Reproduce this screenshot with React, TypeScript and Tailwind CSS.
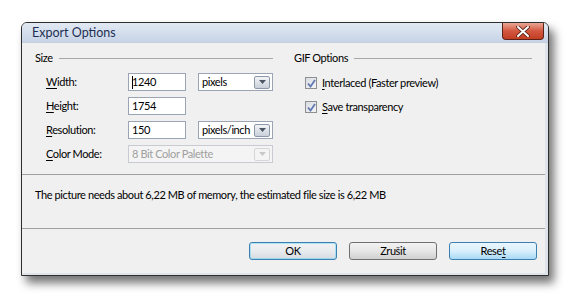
import React from "react";

const font = { fontFamily: 'Lato, "Open Sans", sans-serif' };

function U({ children }: { children: React.ReactNode }) {
  return <span className="underline underline-offset-[2px] decoration-[1px]">{children}</span>;
}

function DropBtn({ disabled }: { disabled?: boolean }) {
  return (
    <div
      className={`w-[16px] h-[13px] rounded-[2px] border flex items-center justify-center ${
        disabled ? "border-[#d5d5d5] bg-[#f4f4f4]" : "border-[#8c97a8] bg-gradient-to-b from-[#f2f4f7] to-[#c9d0da]"
      }`}
    >
      <svg width="7" height="4" viewBox="0 0 7 4">
        <path d="M0 0 L7 0 L3.5 4 Z" fill={disabled ? "#c8c8c8" : "#4d5566"} />
      </svg>
    </div>
  );
}

function Input({ value, caret }: { value: string; caret?: boolean }) {
  return (
    <div className="w-[58px] h-[18px] border border-[#9aa4b2] bg-white flex items-center pl-[3px] text-[11px] text-black relative">
      {caret && <span className="absolute left-[3px] top-[2px] w-[1px] h-[13px] bg-black" />}
      {value}
    </div>
  );
}

function Select({ value, disabled }: { value: string; disabled?: boolean }) {
  return (
    <div
      className={`h-[18px] border flex items-center justify-between pl-[3px] pr-[2px] text-[11px] ${
        disabled ? "border-[#c8ccd2] bg-[#f4f4f4] text-[#a0a0a0]" : "border-[#9aa4b2] bg-white text-black"
      }`}
      style={{ width: disabled ? 145 : 75 }}
    >
      <span>{value}</span>
      <DropBtn disabled={disabled} />
    </div>
  );
}

function Check({ label }: { label: React.ReactNode }) {
  return (
    <div className="flex items-center h-[12px] gap-[5px] text-[11px] text-black">
      <div className="w-[12px] h-[12px] border border-[#8f8f8f] bg-gradient-to-br from-[#d8dce2] to-[#f4f5f7] flex items-center justify-center">
        <svg width="9" height="9" viewBox="0 0 9 9">
          <path d="M1 4.5 L3.5 7.5 L8 1" stroke="#6178b0" strokeWidth="1.8" fill="none" />
        </svg>
      </div>
      <span>{label}</span>
    </div>
  );
}

function GroupHeader({ title, width }: { title: string; width: number }) {
  return (
    <div className="flex items-center h-[14px] text-[11px] text-black" style={{ width }}>
      <span>{title}</span>
      <div className="flex-1 h-[1px] bg-[#a8a8a8] ml-[6px]" />
    </div>
  );
}

function Btn({ children, variant }: { children: React.ReactNode; variant?: "default" | "hover" }) {
  const cls =
    variant === "hover"
      ? "border-[#3c7fb1] bg-gradient-to-b from-[#eaf6fd] via-[#d9f0fc] to-[#a7d9f5]"
      : variant === "default"
      ? "border-[#3c7fb1] bg-gradient-to-b from-[#f2f2f2] via-[#e8ebee] to-[#d6dbe0] shadow-[inset_0_0_0_1px_#48d0fc66]"
      : "border-[#707070] bg-gradient-to-b from-[#f2f2f2] via-[#e6e6e6] to-[#d0d0d0]";
  return (
    <div className={`w-[88px] h-[18px] rounded-[3px] border flex items-center justify-center text-[11px] text-black ${cls}`}>
      {children}
    </div>
  );
}

export default function App() {
  return (
    <div className="w-[570px] h-[298px] bg-white pl-[21px] pt-[22px] tracking-[-0.4px]" style={font}>
      <div className="w-[528px] h-[254px] flex flex-col rounded-t-[6px] border border-[#2e2e2e] bg-[#f0f0f0] shadow-[5px_7px_10px_rgba(0,0,0,0.55)] overflow-hidden">
        {/* Title bar */}
        <div className="h-[20px] flex items-start justify-between bg-gradient-to-b from-[#e2e9f3] to-[#c7d4e6] border-b border-[#c5cfdc]">
          <div className="pl-[10px] pt-[2px] text-[12.5px] leading-[16px] tracking-normal text-[#1e2f55]">Export Options</div>
          <div className="mr-[4px] w-[42px] h-[17px] rounded-b-[4px] border border-t-0 border-[#5b2218] bg-gradient-to-b from-[#e8a696] via-[#d3563e] to-[#c13e24] flex items-center justify-center">
            <svg width="14" height="11" viewBox="0 0 14 11">
              <path d="M2 1 L12 10 M12 1 L2 10" stroke="#4a1c14" strokeWidth="3.6" strokeLinecap="round" />
              <path d="M2 1 L12 10 M12 1 L2 10" stroke="#ffffff" strokeWidth="2" strokeLinecap="round" />
            </svg>
          </div>
        </div>

        {/* Body */}
        <div className="flex-1 flex flex-col border-r-[3px] border-b-[2px] border-[#dfe4ea]">
          <div className="h-[131px] flex pl-[13px] pt-[8px]">
            <div className="flex flex-col w-[259px]">
              <GroupHeader title="Size" width={238} />
              <div className="flex flex-col gap-[6px] mt-[8px] pl-[11px]">
                <div className="flex items-center h-[18px]">
                  <span className="w-[82px] text-[11px] text-black">
                    <U>W</U>idth:
                  </span>
                  <Input value="1240" caret />
                  <div className="ml-[12px]">
                    <Select value="pixels" />
                  </div>
                </div>
                <div className="flex items-center h-[18px]">
                  <span className="w-[82px] text-[11px] text-black">
                    <U>H</U>eight:
                  </span>
                  <Input value="1754" />
                </div>
                <div className="flex items-center h-[18px]">
                  <span className="w-[82px] text-[11px] text-black">
                    <U>R</U>esolution:
                  </span>
                  <Input value="150" />
                  <div className="ml-[12px]">
                    <Select value="pixels/inch" />
                  </div>
                </div>
                <div className="flex items-center h-[18px]">
                  <span className="w-[82px] text-[11px] text-black">
                    <U>C</U>olor Mode:
                  </span>
                  <Select value="8 Bit Color Palette" disabled />
                </div>
              </div>
            </div>
            <div className="flex flex-col">
              <GroupHeader title="GIF Options" width={238} />
              <div className="flex flex-col gap-[12px] mt-[12px] pl-[11px]">
                <Check
                  label={
                    <>
                      <U>I</U>nterlaced (Faster preview)
                    </>
                  }
                />
                <Check
                  label={
                    <>
                      <U>S</U>ave transparency
                    </>
                  }
                />
              </div>
            </div>
          </div>
          <div className="h-[1px] bg-[#a0a0a0]" />
          <div className="h-[53px] pl-[13px] pt-[12px] text-[11px] text-black">
            The picture needs about 6,22 MB of memory, the estimated file size is 6,22 MB
          </div>
          <div className="h-[1px] bg-[#a0a0a0]" />
          <div className="flex justify-end gap-[12px] pr-[8px] pt-[13px]">
            <Btn variant="default">OK</Btn>
            <Btn>Zrušit</Btn>
            <Btn variant="hover">
              Rese<U>t</U>
            </Btn>
          </div>
        </div>
      </div>
    </div>
  );
}
